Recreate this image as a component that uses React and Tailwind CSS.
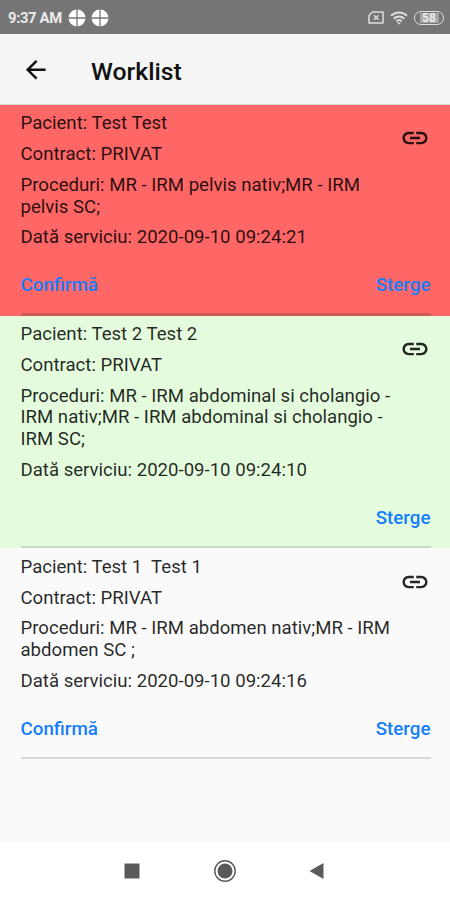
import React from "react";
import { MdArrowBack, MdLink, MdWifi } from "react-icons/md";

const items = [
  {
    patient: "Test Test",
    contract: "PRIVAT",
    procedures: "MR - IRM pelvis nativ;MR - IRM pelvis SC;",
    date: "2020-09-10 09:24:21",
    canConfirm: true,
    bg: "bg-[#ff6666]",
    line: "bg-[#d05a55]",
  },
  {
    patient: "Test 2 Test 2",
    contract: "PRIVAT",
    procedures: "MR - IRM abdominal si cholangio - IRM nativ;MR - IRM abdominal si cholangio - IRM SC;",
    date: "2020-09-10 09:24:10",
    canConfirm: false,
    bg: "bg-[#e4fcdd]",
    line: "bg-[#c9d9c6]",
  },
  {
    patient: "Test 1  Test 1",
    contract: "PRIVAT",
    procedures: "MR - IRM abdomen nativ;MR - IRM abdomen SC ;",
    date: "2020-09-10 09:24:16",
    canConfirm: true,
    bg: "bg-[#fafafa]",
    line: "bg-[#d8d8d8]",
  },
];

function AppDot() {
  return (
    <svg viewBox="0 0 18 18" className="size-[18px]">
      <circle cx="9" cy="9" r="8.5" fill="#fff" />
      <path d="M9 0v18M0 9h18" stroke="#757575" strokeWidth="1.3" />
    </svg>
  );
}

function StatusBar() {
  return (
    <div className="flex h-[34px] shrink-0 items-center justify-between bg-[#757575] pl-2 pr-[6px] pt-px text-[#ececec]">
      <div className="flex items-center">
        <span className="w-[60px] whitespace-nowrap pt-px text-[14.8px] font-bold tracking-[-0.35px]">9:37 AM</span>
        <div className="flex gap-[5px]">
          <AppDot />
          <AppDot />
        </div>
      </div>
      <div className="flex items-center">
        <svg viewBox="0 0 16 13" className="h-[13px] w-4" fill="none" stroke="#dedede">
          <path d="M4.500 1H15v11H1V4.500z" strokeWidth="1.5" strokeLinejoin="round" />
          <path d="M6 4.200l4.600 4.600M10.600 4.200L6 8.800" strokeWidth="1.5" />
        </svg>
        {/* wifi with separate arcs */}
        <svg
          viewBox="0 0 18 14"
          className="ml-[6px] h-[14px] w-[18px]"
          fill="none"
          stroke="#dedede"
          strokeWidth="1.9"
        >
          <path d="M1 4.800a11.500 11.500 0 0 1 16 0M3.700 7.700a7.600 7.600 0 0 1 10.600 0M6.300 10.400a3.900 3.900 0 0 1 5.400 0" />
          <path d="M7 11.500h4l-2 2.300z" fill="#dedede" stroke="none" />
        </svg>
        <div className="ml-[6px] flex h-[14px] w-[30px] items-center justify-center rounded-full border-[1.5px] border-[#dedede]">
          <span className="flex h-[10px] w-[19px] items-center justify-center bg-[#a5a5a5] text-[12px] leading-none font-bold">
            58
          </span>
        </div>
      </div>
    </div>
  );
}

function Header() {
  return (
    <header className="flex h-[70.700px] shrink-0 items-center border-b border-[#d5d5d5] bg-[#f5f5f5] pl-[21px] pt-[2px] text-[#111]">
      <MdArrowBack className="size-[29.500px]" />
      <h1 className="ml-[40.500px] pt-[3px] text-[24.800px] font-medium">Worklist</h1>
    </header>
  );
}

function WorkItem({ item }) {
  return (
    <section className={`${item.bg} flex flex-col pl-[20.5px] pr-[20px] pt-[8.600px]`}>
      <div className="flex justify-between">
        <div className="flex w-[374px] flex-col gap-[9px] text-[18.6px] leading-[21.75px] whitespace-pre-wrap text-[#000000d9]">
          <p>{`Pacient: ${item.patient}`}</p>
          <p>{`Contract: ${item.contract}`}</p>
          <p>{`Proceduri: ${item.procedures}`}</p>
          <p>{`Dată serviciu: ${item.date}`}</p>
        </div>
        <MdLink className="mt-[9.750px] size-[30px] shrink-0 text-[#000000d9]" />
      </div>
      <div className="-mr-[0.5px] mt-[25px] flex h-[22px] items-center justify-between text-[18.8px] font-medium text-[#147efb]">
        {item.canConfirm ? <button>Confirmă</button> : <span />}
        <button>Sterge</button>
      </div>
      <div className={`${item.line} -mr-[0.5px] mt-[17.100px] h-[2.500px]`} />
    </section>
  );
}

function NavBar() {
  return (
    <nav className="flex h-[58px] shrink-0 items-center justify-center bg-white pr-1">
      <svg viewBox="0 0 204 24" className="h-6 w-[204px]" fill="#5a5a5a">
        <rect x="3.5" y="4.5" width="15" height="15" />
        <circle cx="104" cy="12" r="10.2" fill="none" stroke="#5a5a5a" strokeWidth="1.4" />
        <circle cx="104" cy="12" r="7.5" />
        <path d="M188.500 12l14-8v16z" />
      </svg>
    </nav>
  );
}

export default function App() {
  return (
    <div className="flex h-[900px] w-[450px] flex-col overflow-hidden bg-[#fafafa] font-[Roboto,sans-serif]">
      <StatusBar />
      <Header />
      <main className="flex-1">
        {items.map((item) => (
          <WorkItem key={item.date} item={item} />
        ))}
      </main>
      <NavBar />
    </div>
  );
}
